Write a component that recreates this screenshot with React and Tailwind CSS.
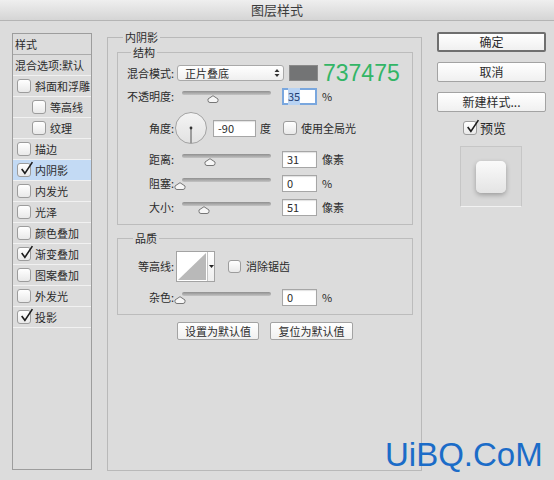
import React from 'react';

function Check({ checked = false, small = false }) {
  return (
    <span
      className={`relative inline-flex shrink-0 rounded-[3px] border border-[#9c9c9c] bg-linear-to-b from-white to-[#e9e9e9] ${
        small ? 'w-[13px] h-[13px]' : 'w-[14px] h-[14px]'
      }`}
    >
      {checked && (
        <svg viewBox="0 0 14 14" className="absolute -top-[3px] left-[1px] w-[15px] h-[15px]">
          <path d="M2.5 7.5 L5.5 11.5 L12.5 1" fill="none" stroke="#1c1c1c" strokeWidth="1.5" />
        </svg>
      )}
    </span>
  );
}

function Slider({ at }) {
  return (
    <div className="ml-[8px] w-[89px] shrink-0 flex flex-col">
      <div className="h-[4px] rounded-full bg-linear-to-b from-[#8f8f8f] to-[#c4c4c4]" />
      <svg width="12" height="8" viewBox="0 0 12 8" style={{ marginLeft: at - 6 }}>
        <path d="M1 4 L6 0.7 L11 4 V5.5 Q11 7.5 9 7.5 H3 Q1 7.5 1 5.5 Z" fill="#f6f6f6" stroke="#767676" />
      </svg>
    </div>
  );
}

function Field({ value, focus = false, w = 'w-[35px]' }) {
  return (
    <div
      className={`${w} h-[17px] shrink-0 flex items-center bg-white pl-[4px] ${
        focus
          ? 'border-2 border-[#7aa7de] pl-[3px]'
          : 'border border-[#a6a6a6] shadow-[inset_0_1px_1px_rgba(0,0,0,0.12)]'
      }`}
    >
      <span className={focus ? 'bg-[#b8d3f3] text-[#1f3f73]' : ''}>{value}</span>
    </div>
  );
}

function Label({ children }) {
  return <span className="w-[56px] shrink-0 text-right">{children}</span>;
}

function SliderRow({ label, at, value, unit, focus }) {
  return (
    <div className="flex items-center h-[17px]">
      <Label>{label}</Label>
      <Slider at={at} />
      <div className="ml-[11px]">
        <Field value={value} focus={focus} />
      </div>
      <span className="ml-[5px]">{unit}</span>
    </div>
  );
}

function Btn({ children, w, strong = false, h = 'h-[20px]' }) {
  return (
    <div
      className={`${w} ${h} flex items-center justify-center rounded-[2px] bg-linear-to-b from-white to-[#f0f0f0] ${
        strong ? 'border-2 border-[#6f6f6f]' : 'border border-[#a3a3a3]'
      }`}
    >
      {children}
    </div>
  );
}

const effects = [
  { t: '斜面和浮雕' },
  { t: '等高线', indent: true },
  { t: '纹理', indent: true },
  { t: '描边' },
  { t: '内阴影', on: true, sel: true },
  { t: '内发光' },
  { t: '光泽' },
  { t: '颜色叠加' },
  { t: '渐变叠加', on: true },
  { t: '图案叠加' },
  { t: '外发光' },
  { t: '投影', on: true },
];

export default function App() {
  return (
    <div className="relative w-[554px] h-[480px] overflow-hidden bg-[#dcdcdc] text-[11px] text-[#2b2b2b] font-['Noto_Sans_CJK_SC',sans-serif]">
      <div className="h-[21px] flex items-center justify-center border-b border-[#b4b4b4] bg-linear-to-b from-[#efefef] to-[#d5d5d5] text-[13px] text-[#3c3c3c]">
        图层样式
      </div>

      <div className="flex items-start">
        {/* effects list */}
        <div className="ml-[12px] mt-[12px] w-[80px] h-[437px] border border-[#9d9d9d] flex flex-col">
          <div className="h-[21px] shrink-0 flex items-center pl-[2px] border-b border-[#ababab]">样式</div>
          <div className="h-[21px] shrink-0 flex items-center pl-[2px] border-b border-[#f1f1f1]">混合选项:默认</div>
          {effects.map((e) => (
            <div
              key={e.t}
              className={`h-[21px] shrink-0 flex items-center gap-[4px] border-b border-[#f1f1f1] ${
                e.indent ? 'pl-[19px]' : 'pl-[4px]'
              } ${e.sel ? 'bg-[#c3daf4]' : ''}`}
            >
              <Check checked={e.on} />
              <span>{e.t}</span>
            </div>
          ))}
        </div>

        {/* inner shadow settings */}
        <fieldset className="ml-[15px] mt-[10px] w-[315px] h-[440px] border border-[#b9b9b9]">
          <legend className="ml-[15px] px-[2px] leading-[13px]">内阴影</legend>
          <div className="pl-[9px] pr-[8px] flex flex-col">
            <fieldset className="mt-[2px] border border-[#bcbcbc]">
              <legend className="ml-[13px] px-[2px] leading-[13px]">结构</legend>
              <div className="pt-[6px] pb-[8px] flex flex-col gap-[7px]">
                <div className="flex items-center h-[16px]">
                  <Label>混合模式:</Label>
                  <div className="ml-[3px] w-[107px] h-[16px] flex items-center justify-between pl-[7px] pr-[3px] rounded-[3px] border border-[#a9a9a9] bg-linear-to-b from-white to-[#efefef]">
                    <span>正片叠底</span>
                    <svg width="6" height="10" viewBox="0 0 6 10">
                      <path d="M0.5 4 L3 1 L5.5 4 Z M0.5 6 L3 9 L5.5 6 Z" fill="#333" />
                    </svg>
                  </div>
                  <div className="ml-[5px] w-[29px] h-[16px] bg-[#737475] border border-[#8a8a8a]" />
                  <span className="ml-[5px] text-[23px] leading-none text-[#33b566] font-['Liberation_Sans',Arial,sans-serif]">
                    737475
                  </span>
                </div>

                <SliderRow label="不透明度:" at={31} value="35" unit="%" focus />

                <div className="flex items-center h-[32px]">
                  <Label>角度:</Label>
                  <svg width="32" height="32" viewBox="0 0 32 32" className="ml-[1px]">
                    <defs>
                      <linearGradient id="dial" x1="0" y1="0" x2="0" y2="1">
                        <stop offset="0" stopColor="#f4f4f4" />
                        <stop offset="1" stopColor="#e2e2e2" />
                      </linearGradient>
                    </defs>
                    <circle cx="16" cy="16" r="15.5" fill="url(#dial)" stroke="#a2a2a2" />
                    <line x1="16" y1="16" x2="16" y2="31" stroke="#555" strokeWidth="1" />
                    <circle cx="16" cy="16" r="1.4" fill="#333" />
                  </svg>
                  <div className="ml-[6px]">
                    <Field value="-90" w="w-[43px]" />
                  </div>
                  <span className="ml-[4px]">度</span>
                  <span className="ml-[12px] flex items-center gap-[4px]">
                    <Check />
                    <span>使用全局光</span>
                  </span>
                </div>

                <SliderRow label="距离:" at={28} value="31" unit="像素" />
                <SliderRow label="阻塞:" at={-2} value="0" unit="%" />
                <SliderRow label="大小:" at={22} value="51" unit="像素" />
              </div>
            </fieldset>

            <fieldset className="mt-[7px] border border-[#bcbcbc]">
              <legend className="ml-[15px] px-[2px] leading-[13px]">品质</legend>
              <div className="pt-[6px] pb-[8px] flex flex-col gap-[7px]">
                <div className="flex items-center h-[31px]">
                  <Label>等高线:</Label>
                  <div className="ml-[2px] w-[39px] h-[31px] flex border border-[#a3a3a3] bg-white">
                    <svg width="30" height="29" viewBox="0 0 30 29">
                      <path d="M1 28 L29 1 V28 Z" fill="#b9b9b9" />
                    </svg>
                    <div className="flex-1 border-l border-[#c4c4c4] bg-linear-to-b from-white to-[#eeeeee] flex items-center justify-center">
                      <svg width="5" height="3" viewBox="0 0 5 3">
                        <path d="M0 0 H5 L2.5 3 Z" fill="#222" />
                      </svg>
                    </div>
                  </div>
                  <span className="ml-[13px] flex items-center gap-[5px]">
                    <Check small />
                    <span>消除锯齿</span>
                  </span>
                </div>
                <SliderRow label="杂色:" at={-2} value="0" unit="%" />
              </div>
            </fieldset>

            <div className="mt-[7px] flex justify-center gap-[11px]">
              <Btn w="w-[82px]" h="h-[18px]">设置为默认值</Btn>
              <Btn w="w-[83px]" h="h-[18px]">复位为默认值</Btn>
            </div>
          </div>
        </fieldset>

        {/* actions */}
        <div className="ml-[15px] mt-[11px] w-[109px] flex flex-col text-[12px]">
          <Btn w="w-[109px]" strong>确定</Btn>
          <div className="mt-[10px]">
            <Btn w="w-[109px]">取消</Btn>
          </div>
          <div className="mt-[10px]">
            <Btn w="w-[109px]">新建样式...</Btn>
          </div>
          <div className="mt-[8px] pl-[26px] flex items-center gap-[3px] h-[15px] text-[13px]">
            <Check checked />
            <span>预览</span>
          </div>
          <div className="ml-[23px] mt-[11px] w-[62px] h-[61px] border border-[#c6c6c6] border-b-[#f2f2f2] bg-[#d8d8d8] flex items-center justify-center">
            <div className="w-[30px] h-[32px] rounded-[5px] bg-linear-to-b from-[#fafafa] to-[#e4e4e4] shadow-[0_2px_5px_rgba(0,0,0,0.28)]" />
          </div>
        </div>
      </div>

      <div className="absolute left-[385px] top-[438px] text-[33px] leading-none text-[#1b6cc8] font-['Liberation_Sans',Arial,sans-serif]">
        UiBQ.CoM
      </div>
    </div>
  );
}
